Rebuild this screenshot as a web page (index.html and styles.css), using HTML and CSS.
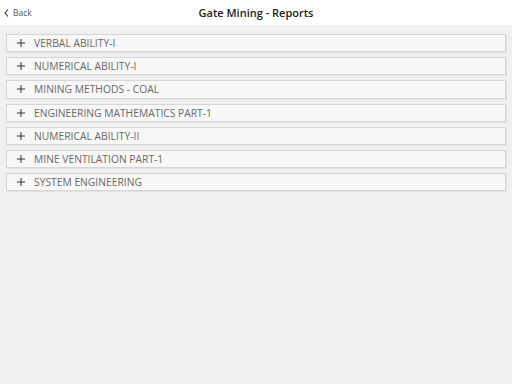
FILE: index.html
```html
<!DOCTYPE html>
<html>
<head>
    <title>Gate Mining - Reports</title>
    <link rel="stylesheet" href="styles.css">
</head>
<body>
    <div id="wrap">
        <div class="topBar">
            <div class="back">
                <svg class="chev" width="5" height="8" viewBox="0 0 5 8"><path d="M4 0.5 L1 4 L4 7.5" fill="none" stroke="#333" stroke-width="1.1"/></svg>
                <span>Back</span>
            </div>
            <div class="title">Gate Mining - Reports</div>
        </div>
        <div class="list">
            <div class="item"><svg class="plus" viewBox="0 0 8 8"><path d="M0 4H8M4 0V8"/></svg>VERBAL ABILITY-I</div>
            <div class="item"><svg class="plus" viewBox="0 0 8 8"><path d="M0 4H8M4 0V8"/></svg>NUMERICAL ABILITY-I</div>
            <div class="item"><svg class="plus" viewBox="0 0 8 8"><path d="M0 4H8M4 0V8"/></svg>MINING METHODS - COAL</div>
            <div class="item"><svg class="plus" viewBox="0 0 8 8"><path d="M0 4H8M4 0V8"/></svg>ENGINEERING MATHEMATICS PART-1</div>
            <div class="item"><svg class="plus" viewBox="0 0 8 8"><path d="M0 4H8M4 0V8"/></svg>NUMERICAL ABILITY-II</div>
            <div class="item"><svg class="plus" viewBox="0 0 8 8"><path d="M0 4H8M4 0V8"/></svg>MINE VENTILATION PART-1</div>
            <div class="item"><svg class="plus" viewBox="0 0 8 8"><path d="M0 4H8M4 0V8"/></svg>SYSTEM ENGINEERING</div>
        </div>
    </div>
</body>
</html>
```
FILE: styles.css
```css
html, body {
    padding: 0;
    margin: 0;
    font-family: "Open Sans", "Noto Sans", sans-serif;
    background: #f0f0f0;
}
#wrap {
    width: 100vw;
    height: 100vh;
    display: flex;
    flex-direction: column;
}
.topBar {
    height: 25px;
    background: white;
    position: relative;
    display: flex;
    align-items: center;
    justify-content: center;
}
.back {
    position: absolute;
    left: 4px;
    top: 7px;
    display: flex;
    align-items: center;
    gap: 4px;
    font-size: 8.5px;
    color: #555;
}
.title {
    font-size: 11px;
    font-weight: 600;
    color: #222;
}
.list {
    padding: 9px 6px;
    display: flex;
    flex-direction: column;
    gap: 5px;
}
.item {
    height: 16.2px;
    background: #f7f7f7;
    border: 1px solid #d6d6d6;
    box-shadow: 1px 1px 0 #e2e2e2;
    display: flex;
    align-items: center;
    font-size: 10.3px;
    color: #6a6a6a;
}
.plus {
    width: 8px;
    height: 8px;
    margin-left: 10px;
    margin-right: 9px;
    stroke: #333;
    stroke-width: 1;
}
```
